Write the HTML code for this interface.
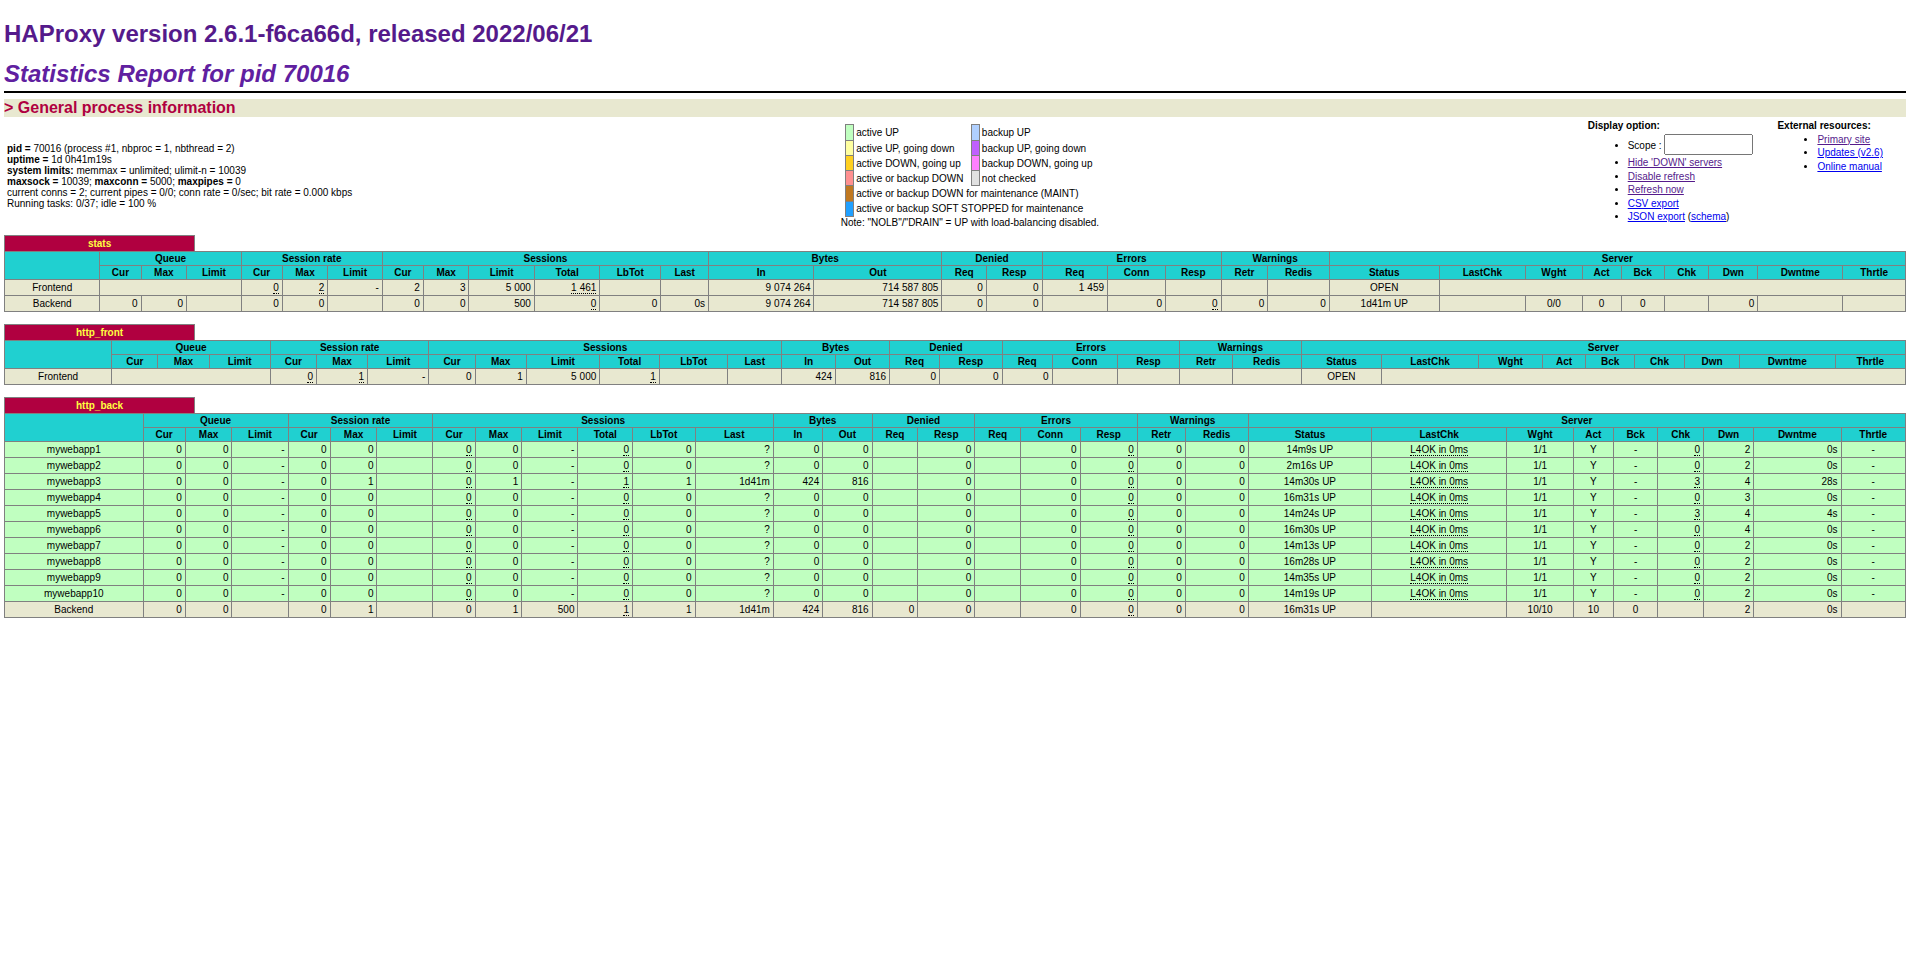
<!DOCTYPE html>
<html><head><meta charset="utf-8"><title>Statistics Report for HAProxy</title>
<style>
body { font-family: "Liberation Sans", sans-serif; font-size: 12px; font-weight: normal; color: black; background: white; margin: 4px 6px 4px 4px;}
th,td { font-size: 10px;}
h1 { font-size: x-large; margin-bottom: 0.5em;}
h1 a { color: #551a8b; text-decoration: none; }
h2 { font-family: "Liberation Sans", sans-serif; font-size: x-large; font-weight: bold; font-style: italic; color: #6020a0; margin-top: 0em; margin-bottom: 0em;}
h3 { font-family: "Liberation Sans", sans-serif; font-size: 16px; font-weight: bold; color: #b00040; background: #e8e8d0; margin-top: 0em; margin-bottom: 0em;}
li { margin-top: 0.25em; margin-right: 2em;}
a { color: #0000ee; text-decoration: underline; }
a.v { color: #551a8b; }
.hr {margin-top: 0.25em; border-color: black; border-bottom-style: solid;}
.titre {background: #20D0D0;color: #000000; font-weight: bold; text-align: center;}
.frontend {background: #e8e8d0;}
.backend {background: #e8e8d0;}
.active_down {background: #ff9090;}
.active_going_up {background: #ffd020;}
.active_going_down {background: #ffffa0;}
.active_up {background: #c0ffc0;}
.active_draining {background: #20a0FF;}
.active_no_check {background: #e0e0e0;}
.backup_going_up {background: #ff80ff;}
.backup_going_down {background: #c060ff;}
.backup_up {background: #b0d0ff;}
.maintain {background: #c07820;}
.rls {letter-spacing: 0.2em; margin-right: 1px;}
a.px {color: #ffff40; text-decoration: none;}
a.lfsb {color: #000000; text-decoration: none;}
table.tbl { border-collapse: collapse; border-style: none;}
table.tbl td { text-align: right; border-width: 1px; border-style: solid; padding: 2px 3px; border-color: gray; white-space: nowrap;}
table.tbl td.ac { text-align: center;}
table.tbl th { border-width: 1px; border-style: solid; border-color: gray;}
table.tbl th.pxname { background: #b00040; color: #ffff40; font-weight: bold; border-style: solid solid none solid; padding: 2px 3px; white-space: nowrap;}
table.tbl th.empty { border-style: none; empty-cells: hide; background: white;}
table.lgd { border-collapse: collapse; border-width: 1px; border-style: none none none solid; border-color: black;}
table.lgd td { border-width: 1px; border-style: solid; border-color: gray; padding: 2px;}
table.lgd td.noborder { border-style: none; padding: 2px; white-space: nowrap;}
u {text-decoration:none; border-bottom: 1px dotted black;}
input { font-family: "Liberation Sans", sans-serif; }
</style></head>
<body><h1><a>HAProxy version 2.6.1-f6ca66d, released 2022/06/21</a></h1>
<h2>Statistics Report for pid 70016</h2>
<hr width="100%" class="hr">
<h3>&gt; General process information</h3>
<table border=0><tr><td align="left" nowrap width="1%">
<p><b>pid = </b> 70016 (process #1, nbproc = 1, nbthread = 2)<br>
<b>uptime = </b> 1d 0h41m19s<br>
<b>system limits:</b> memmax = unlimited; ulimit-n = 10039<br>
<b>maxsock = </b> 10039; <b>maxconn = </b> 5000; <b>maxpipes = </b> 0<br>
current conns = 2; current pipes = 0/0; conn rate = 0/sec; bit rate = 0.000 kbps<br>
Running tasks: 0/37; idle = 100 %<br>
</td><td align="center" nowrap>
<table class="lgd"><tr>
<td class="active_up">&nbsp;</td><td class="noborder">active UP </td><td class="backup_up">&nbsp;</td><td class="noborder">backup UP </td></tr><tr>
<td class="active_going_down"></td><td class="noborder">active UP, going down </td><td class="backup_going_down"></td><td class="noborder">backup UP, going down </td></tr><tr>
<td class="active_going_up"></td><td class="noborder">active DOWN, going up </td><td class="backup_going_up"></td><td class="noborder">backup DOWN, going up </td></tr><tr>
<td class="active_down"></td><td class="noborder">active or backup DOWN &nbsp;</td><td class="active_no_check"></td><td class="noborder">not checked </td></tr><tr>
<td class="maintain"></td><td class="noborder" colspan="3">active or backup DOWN for maintenance (MAINT) &nbsp;</td></tr><tr>
<td class="active_draining"></td><td class="noborder" colspan="3">active or backup SOFT STOPPED for maintenance &nbsp;</td></tr></table>
Note: "NOLB"/"DRAIN" = UP with load-balancing disabled.</td><td align="left" valign="top" nowrap width="1%"><b>Display option:</b><ul style="margin-top: 0.25em;"><li><form>Scope : <input value="" name="scope" size="8" maxlength="31" tabindex="1"/></form>
<li><a class=v>Hide 'DOWN' servers</a><br>
<li><a class=v>Disable refresh</a><br>
<li><a class=v>Refresh now</a><br>
<li><a>CSV export</a><br>
<li><a>JSON export</a> (<a>schema</a>)<br>
</ul></td><td align="left" valign="top" nowrap width="1%"><b>External resources:</b><ul style="margin-top: 0.25em;">
<li><a class=v>Primary site</a><br>
<li><a>Updates (v2.6)</a><br>
<li><a>Online manual</a><br>
</ul></td></tr></table>
<table class="tbl" width="100%">
<tr class="titre"><th class="pxname" width="10%"><a class=px>stats</a></th><th class="empty" width="90%"></th></tr>
</table>
<table class="tbl" width="100%">
<tr class="titre"><th rowspan=2></th><th colspan=3>Queue</th><th colspan=3>Session rate</th><th colspan=6>Sessions</th><th colspan=2>Bytes</th><th colspan=2>Denied</th><th colspan=3>Errors</th><th colspan=2>Warnings</th><th colspan=9>Server</th></tr>
<tr class="titre"><th>Cur</th><th>Max</th><th>Limit</th><th>Cur</th><th>Max</th><th>Limit</th><th>Cur</th><th>Max</th><th>Limit</th><th>Total</th><th>LbTot</th><th>Last</th><th>In</th><th>Out</th><th>Req</th><th>Resp</th><th>Req</th><th>Conn</th><th>Resp</th><th>Retr</th><th>Redis</th><th>Status</th><th>LastChk</th><th>Wght</th><th>Act</th><th>Bck</th><th>Chk</th><th>Dwn</th><th>Dwntme</th><th>Thrtle</th></tr>
<tr class="frontend"><td class=ac><a class=lfsb>Frontend</a></td><td colspan=3></td><td><u>0</u></td><td><u>2</u></td><td>-</td><td>2</td><td>3</td><td><span class="rls">5</span>000</td><td><u><span class="rls">1</span>461</u></td><td></td><td></td><td><span class="rls">9</span>07<span class="rls">4</span>264</td><td>71<span class="rls">4</span>58<span class="rls">7</span>805</td><td>0</td><td>0</td><td><span class="rls">1</span>459</td><td></td><td></td><td></td><td></td><td class=ac>OPEN</td><td class=ac colspan=8></td></tr>
<tr class="backend"><td class=ac><a class=lfsb>Backend</a></td><td>0</td><td>0</td><td></td><td>0</td><td>0</td><td></td><td>0</td><td>0</td><td>500</td><td><u>0</u></td><td>0</td><td>0s</td><td><span class="rls">9</span>07<span class="rls">4</span>264</td><td>71<span class="rls">4</span>58<span class="rls">7</span>805</td><td>0</td><td>0</td><td></td><td>0</td><td><u>0</u></td><td>0</td><td>0</td><td class=ac>1d41m UP</td><td class=ac>&nbsp;</td><td class=ac>0/0</td><td class=ac>0</td><td class=ac>0</td><td class=ac>&nbsp;</td><td>0</td><td>&nbsp;</td><td></td></tr>
</table><p>
<table class="tbl" width="100%">
<tr class="titre"><th class="pxname" width="10%"><a class=px>http_front</a></th><th class="empty" width="90%"></th></tr>
</table>
<table class="tbl" width="100%">
<tr class="titre"><th rowspan=2></th><th colspan=3>Queue</th><th colspan=3>Session rate</th><th colspan=6>Sessions</th><th colspan=2>Bytes</th><th colspan=2>Denied</th><th colspan=3>Errors</th><th colspan=2>Warnings</th><th colspan=9>Server</th></tr>
<tr class="titre"><th>Cur</th><th>Max</th><th>Limit</th><th>Cur</th><th>Max</th><th>Limit</th><th>Cur</th><th>Max</th><th>Limit</th><th>Total</th><th>LbTot</th><th>Last</th><th>In</th><th>Out</th><th>Req</th><th>Resp</th><th>Req</th><th>Conn</th><th>Resp</th><th>Retr</th><th>Redis</th><th>Status</th><th>LastChk</th><th>Wght</th><th>Act</th><th>Bck</th><th>Chk</th><th>Dwn</th><th>Dwntme</th><th>Thrtle</th></tr>
<tr class="frontend"><td class=ac><a class=lfsb>Frontend</a></td><td colspan=3></td><td><u>0</u></td><td><u>1</u></td><td>-</td><td>0</td><td>1</td><td><span class="rls">5</span>000</td><td><u>1</u></td><td></td><td></td><td>424</td><td>816</td><td>0</td><td>0</td><td>0</td><td></td><td></td><td></td><td></td><td class=ac>OPEN</td><td class=ac colspan=8></td></tr>
</table><p>
<table class="tbl" width="100%">
<tr class="titre"><th class="pxname" width="10%"><a class=px>http_back</a></th><th class="empty" width="90%"></th></tr>
</table>
<table class="tbl" width="100%">
<tr class="titre"><th rowspan=2></th><th colspan=3>Queue</th><th colspan=3>Session rate</th><th colspan=6>Sessions</th><th colspan=2>Bytes</th><th colspan=2>Denied</th><th colspan=3>Errors</th><th colspan=2>Warnings</th><th colspan=9>Server</th></tr>
<tr class="titre"><th>Cur</th><th>Max</th><th>Limit</th><th>Cur</th><th>Max</th><th>Limit</th><th>Cur</th><th>Max</th><th>Limit</th><th>Total</th><th>LbTot</th><th>Last</th><th>In</th><th>Out</th><th>Req</th><th>Resp</th><th>Req</th><th>Conn</th><th>Resp</th><th>Retr</th><th>Redis</th><th>Status</th><th>LastChk</th><th>Wght</th><th>Act</th><th>Bck</th><th>Chk</th><th>Dwn</th><th>Dwntme</th><th>Thrtle</th></tr>
<tr class="active_up"><td class=ac><a class=lfsb>mywebapp1</a></td><td>0</td><td>0</td><td>-</td><td>0</td><td>0</td><td></td><td><u>0</u></td><td>0</td><td>-</td><td><u>0</u></td><td>0</td><td>?</td><td>0</td><td>0</td><td></td><td>0</td><td></td><td>0</td><td><u>0</u></td><td>0</td><td>0</td><td class=ac>14m9s UP</td><td class=ac><u>L4OK in 0ms</u></td><td class=ac>1/1</td><td class=ac>Y</td><td class=ac>-</td><td><u>0</u></td><td>2</td><td>0s</td><td class=ac>-</td></tr>
<tr class="active_up"><td class=ac><a class=lfsb>mywebapp2</a></td><td>0</td><td>0</td><td>-</td><td>0</td><td>0</td><td></td><td><u>0</u></td><td>0</td><td>-</td><td><u>0</u></td><td>0</td><td>?</td><td>0</td><td>0</td><td></td><td>0</td><td></td><td>0</td><td><u>0</u></td><td>0</td><td>0</td><td class=ac>2m16s UP</td><td class=ac><u>L4OK in 0ms</u></td><td class=ac>1/1</td><td class=ac>Y</td><td class=ac>-</td><td><u>0</u></td><td>2</td><td>0s</td><td class=ac>-</td></tr>
<tr class="active_up"><td class=ac><a class=lfsb>mywebapp3</a></td><td>0</td><td>0</td><td>-</td><td>0</td><td>1</td><td></td><td><u>0</u></td><td>1</td><td>-</td><td><u>1</u></td><td>1</td><td>1d41m</td><td>424</td><td>816</td><td></td><td>0</td><td></td><td>0</td><td><u>0</u></td><td>0</td><td>0</td><td class=ac>14m30s UP</td><td class=ac><u>L4OK in 0ms</u></td><td class=ac>1/1</td><td class=ac>Y</td><td class=ac>-</td><td><u>3</u></td><td>4</td><td>28s</td><td class=ac>-</td></tr>
<tr class="active_up"><td class=ac><a class=lfsb>mywebapp4</a></td><td>0</td><td>0</td><td>-</td><td>0</td><td>0</td><td></td><td><u>0</u></td><td>0</td><td>-</td><td><u>0</u></td><td>0</td><td>?</td><td>0</td><td>0</td><td></td><td>0</td><td></td><td>0</td><td><u>0</u></td><td>0</td><td>0</td><td class=ac>16m31s UP</td><td class=ac><u>L4OK in 0ms</u></td><td class=ac>1/1</td><td class=ac>Y</td><td class=ac>-</td><td><u>0</u></td><td>3</td><td>0s</td><td class=ac>-</td></tr>
<tr class="active_up"><td class=ac><a class=lfsb>mywebapp5</a></td><td>0</td><td>0</td><td>-</td><td>0</td><td>0</td><td></td><td><u>0</u></td><td>0</td><td>-</td><td><u>0</u></td><td>0</td><td>?</td><td>0</td><td>0</td><td></td><td>0</td><td></td><td>0</td><td><u>0</u></td><td>0</td><td>0</td><td class=ac>14m24s UP</td><td class=ac><u>L4OK in 0ms</u></td><td class=ac>1/1</td><td class=ac>Y</td><td class=ac>-</td><td><u>3</u></td><td>4</td><td>4s</td><td class=ac>-</td></tr>
<tr class="active_up"><td class=ac><a class=lfsb>mywebapp6</a></td><td>0</td><td>0</td><td>-</td><td>0</td><td>0</td><td></td><td><u>0</u></td><td>0</td><td>-</td><td><u>0</u></td><td>0</td><td>?</td><td>0</td><td>0</td><td></td><td>0</td><td></td><td>0</td><td><u>0</u></td><td>0</td><td>0</td><td class=ac>16m30s UP</td><td class=ac><u>L4OK in 0ms</u></td><td class=ac>1/1</td><td class=ac>Y</td><td class=ac>-</td><td><u>0</u></td><td>4</td><td>0s</td><td class=ac>-</td></tr>
<tr class="active_up"><td class=ac><a class=lfsb>mywebapp7</a></td><td>0</td><td>0</td><td>-</td><td>0</td><td>0</td><td></td><td><u>0</u></td><td>0</td><td>-</td><td><u>0</u></td><td>0</td><td>?</td><td>0</td><td>0</td><td></td><td>0</td><td></td><td>0</td><td><u>0</u></td><td>0</td><td>0</td><td class=ac>14m13s UP</td><td class=ac><u>L4OK in 0ms</u></td><td class=ac>1/1</td><td class=ac>Y</td><td class=ac>-</td><td><u>0</u></td><td>2</td><td>0s</td><td class=ac>-</td></tr>
<tr class="active_up"><td class=ac><a class=lfsb>mywebapp8</a></td><td>0</td><td>0</td><td>-</td><td>0</td><td>0</td><td></td><td><u>0</u></td><td>0</td><td>-</td><td><u>0</u></td><td>0</td><td>?</td><td>0</td><td>0</td><td></td><td>0</td><td></td><td>0</td><td><u>0</u></td><td>0</td><td>0</td><td class=ac>16m28s UP</td><td class=ac><u>L4OK in 0ms</u></td><td class=ac>1/1</td><td class=ac>Y</td><td class=ac>-</td><td><u>0</u></td><td>2</td><td>0s</td><td class=ac>-</td></tr>
<tr class="active_up"><td class=ac><a class=lfsb>mywebapp9</a></td><td>0</td><td>0</td><td>-</td><td>0</td><td>0</td><td></td><td><u>0</u></td><td>0</td><td>-</td><td><u>0</u></td><td>0</td><td>?</td><td>0</td><td>0</td><td></td><td>0</td><td></td><td>0</td><td><u>0</u></td><td>0</td><td>0</td><td class=ac>14m35s UP</td><td class=ac><u>L4OK in 0ms</u></td><td class=ac>1/1</td><td class=ac>Y</td><td class=ac>-</td><td><u>0</u></td><td>2</td><td>0s</td><td class=ac>-</td></tr>
<tr class="active_up"><td class=ac><a class=lfsb>mywebapp10</a></td><td>0</td><td>0</td><td>-</td><td>0</td><td>0</td><td></td><td><u>0</u></td><td>0</td><td>-</td><td><u>0</u></td><td>0</td><td>?</td><td>0</td><td>0</td><td></td><td>0</td><td></td><td>0</td><td><u>0</u></td><td>0</td><td>0</td><td class=ac>14m19s UP</td><td class=ac><u>L4OK in 0ms</u></td><td class=ac>1/1</td><td class=ac>Y</td><td class=ac>-</td><td><u>0</u></td><td>2</td><td>0s</td><td class=ac>-</td></tr>
<tr class="backend"><td class=ac><a class=lfsb>Backend</a></td><td>0</td><td>0</td><td></td><td>0</td><td>1</td><td></td><td>0</td><td>1</td><td>500</td><td><u>1</u></td><td>1</td><td>1d41m</td><td>424</td><td>816</td><td>0</td><td>0</td><td></td><td>0</td><td><u>0</u></td><td>0</td><td>0</td><td class=ac>16m31s UP</td><td class=ac>&nbsp;</td><td class=ac>10/10</td><td class=ac>10</td><td class=ac>0</td><td class=ac>&nbsp;</td><td>2</td><td>0s</td><td></td></tr>
</table><p>
</body></html>
